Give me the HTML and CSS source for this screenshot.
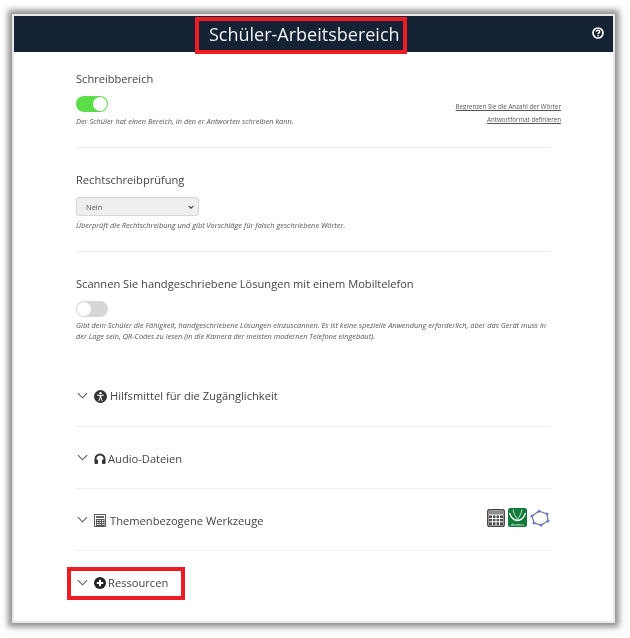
FILE: index.html
```html
<!DOCTYPE html>
<html lang="de">
<head>
<meta charset="utf-8">
<title>Schüler-Arbeitsbereich</title>
<link rel="stylesheet" href="styles.css">
</head>
<body>
<div class="frame">
  <header class="topbar">
    <h1 class="title">Schüler-Arbeitsbereich</h1>
    <svg class="help" viewBox="0 0 24 24" width="12" height="12"><circle cx="12" cy="12" r="10" fill="none" stroke="#fff" stroke-width="3.4"/><path d="M8.6 9.6c0-2 1.5-3.2 3.5-3.2s3.4 1.2 3.4 2.9c0 2.600-3.300 2.500-3.300 5" fill="none" stroke="#fff" stroke-width="2.800"/><rect x="10.800" y="15.800" width="2.800" height="2.800" fill="#fff"/></svg>
    <span class="callout callout-title"></span>
  </header>
  <main class="content">
    <section class="block block-write">
      <div class="block-main">
        <h2 class="label">Schreibbereich</h2>
        <span class="toggle toggle-on"><i class="knob"></i></span>
        <p class="hint">Der Schüler hat einen Bereich, in den er Antworten schreiben kann.</p>
      </div>
      <div class="links">
        <a class="link">Begrenzen Sie die Anzahl der Wörter</a>
        <a class="link">Antwortformat definieren</a>
      </div>
    </section>
    <section class="block block-spell">
      <h2 class="label">Rechtschreibprüfung</h2>
      <div class="select"><span>Nein</span>
        <svg viewBox="0 0 10 6" width="6" height="4"><path d="M1 1l4 4 4-4" fill="none" stroke="#444" stroke-width="1.800"/></svg>
      </div>
      <p class="hint">Überprüft die Rechtschreibung und gibt Vorschläge für falsch geschriebene Wörter.</p>
    </section>
    <section class="block block-scan">
      <h2 class="label">Scannen Sie handgeschriebene Lösungen mit einem Mobiltelefon</h2>
      <span class="toggle"><i class="knob"></i></span>
      <p class="hint hint-tight">Gibt dem Schüler die Fähigkeit, handgeschriebene Lösungen einzuscannen. Es ist keine spezielle Anwendung erforderlich, aber das Gerät muss in der Lage sein, QR-Codes zu lesen (in die Kamera der meisten modernen Telefone eingebaut).</p>
    </section>
    <section class="row row-first">
      <svg class="chev" viewBox="0 0 12 7" width="11" height="7"><path d="M1 1l5 5 5-5" fill="none" stroke="#555" stroke-width="1.100"/></svg>
      <svg class="ico ico-wide" viewBox="0 0 24 24" width="13" height="13"><circle cx="12" cy="12" r="12" fill="#333"/><circle cx="12" cy="5.800" r="2.300" fill="#fff"/><path d="M5.500 9.200L12 10.500l6.500-1.300" fill="none" stroke="#fff" stroke-width="1.800"/><path d="M12 10v5" stroke="#fff" stroke-width="3.200"/><path d="M11 14.500L8.800 20.500M13 14.500l2.200 6" fill="none" stroke="#fff" stroke-width="1.800"/></svg>
      <span class="row-text">Hilfsmittel für die Zugänglichkeit</span>
    </section>
    <section class="row">
      <svg class="chev" viewBox="0 0 12 7" width="11" height="7"><path d="M1 1l5 5 5-5" fill="none" stroke="#555" stroke-width="1.100"/></svg>
      <svg class="ico" viewBox="0 0 24 24" width="12" height="12"><path d="M3 15V12a9 9 0 0 1 18 0v3" fill="none" stroke="#333" stroke-width="4"/><rect x="1" y="13" width="7" height="9" rx="2" fill="#333"/><rect x="16" y="13" width="7" height="9" rx="2" fill="#333"/></svg>
      <span class="row-text">Audio-Dateien</span>
    </section>
    <section class="row">
      <svg class="chev" viewBox="0 0 12 7" width="11" height="7"><path d="M1 1l5 5 5-5" fill="none" stroke="#555" stroke-width="1.100"/></svg>
      <svg class="ico ico-calc" viewBox="0 0 12 13" width="12" height="13"><path d="M.5.500h11v12H.5z" fill="#fff" stroke="#555"/><path d="M2 2h8v2H2z" fill="#666"/><path d="M2 5.500h8M2 7.500h8M2 9.500h8M2 11.500h8M2.500 5v7M5 5v7M7.500 5v7M10 5v7" stroke="#555" stroke-width="1"/></svg>
      <span class="row-text">Themenbezogene Werkzeuge</span>
      <div class="tools">
        <svg viewBox="0 0 18 18" width="18" height="18"><rect x=".8" y=".8" width="16.400" height="16.400" rx="1.500" fill="#fff" stroke="#4a4038" stroke-width="1.500"/><rect x="2" y="2" width="14" height="3.500" fill="#8a8a8a"/><path d="M2 6.500h14v9.500H2z" fill="#4a4a52"/><path d="M5.500 6v10M9 6v10M12.500 6v10M2 9.500h14M2 12.800h14" stroke="#fff" stroke-width="1"/></svg>
        <svg class="tool-desmos" viewBox="0 0 19 19" width="19" height="19"><rect width="19" height="19" rx="2.500" fill="#127a3a"/><path d="M1.500 5C4 12 7 12.500 9.500 12.500S15 12 17.500 5" fill="none" stroke="#fff" stroke-width="1.300"/><path d="M5 1.500c1 5 3 8.500 6.500 11.500M14 1.500c-1 5-3 8.500-6.500 11.500" fill="none" stroke="#cfe8d6" stroke-width=".9"/><text x="9.500" y="17.500" class="desmos-text">desmos</text></svg>
        <svg class="tool-geo" viewBox="0 0 20 18" width="20" height="18"><path d="M9 2l8 3 1 7-7 4-7-2L2 7z" fill="none" stroke="#777" stroke-width="1.200"/><g fill="#6a78cf"><circle cx="9" cy="2.200" r="1.500"/><circle cx="17" cy="5" r="1.500"/><circle cx="18" cy="12" r="1.500"/><circle cx="11" cy="16" r="1.500"/><circle cx="4" cy="14" r="1.500"/><circle cx="2" cy="7" r="1.500"/></g></svg>
      </div>
    </section>
    <section class="row row-last">
      <svg class="chev" viewBox="0 0 12 7" width="11" height="7"><path d="M1 1l5 5 5-5" fill="none" stroke="#555" stroke-width="1.100"/></svg>
      <svg class="ico" viewBox="0 0 24 24" width="12" height="12"><circle cx="12" cy="12" r="12" fill="#222"/><path d="M12 5.500v13M5.500 12h13" stroke="#fff" stroke-width="4"/></svg>
      <span class="row-text">Ressourcen</span>
      <span class="callout callout-res"></span>
    </section>
  </main>
</div>
</body>
</html>
```
FILE: styles.css
```css
* { box-sizing: border-box; }
html, body { margin: 0; padding: 0; background: #fff; }
body {
  width: 630px;
  height: 638px;
  padding: 16px 0 0 14px;
  overflow: hidden;
  font-family: "Open Sans", sans-serif;
  color: #444;
}
.frame {
  width: 599px;
  height: 605px;
  background: #fff;
  box-shadow: 0 0 0 2px #e8e8e8, 0 0 6px 6px #8e8e8e;
  filter: blur(.35px);
}
.topbar {
  position: relative;
  height: 36px;
  background: #152234;
  color: #f0f2f4;
}
.title {
  margin: 0;
  position: absolute;
  left: 195px;
  top: 5px;
  font-size: 18px;
  line-height: 27px;
  font-weight: 400;
}
.help { position: absolute; left: 578px; top: 11px; }
.callout {
  position: absolute;
  border: 4px solid #ed1c24;
}
.callout-title { left: 181px; top: 1px; width: 212px; height: 37px; }
.content { padding: 0 62px; }
.block { border-bottom: 1px solid #eeeeee; }
.block-write {
  display: flex;
  justify-content: space-between;
  height: 96px;
  padding-top: 19px;
}
.block-spell { height: 104px; padding-top: 24px; }
.block-scan { height: 112px; padding-top: 24px; border-bottom: 0; }
.label {
  margin: 0;
  font-size: 11.100px;
  line-height: 16px;
  font-weight: 400;
  color: #444;
}
.toggle {
  display: block;
  position: relative;
  width: 32px;
  height: 16px;
  margin-top: 9px;
  border-radius: 8px;
  background: #d6d6d6;
}
.toggle-on { background: #5bdc49; }
.knob {
  position: absolute;
  top: 1px;
  left: 1px;
  width: 14px;
  height: 14px;
  border-radius: 50%;
  background: #fff;
}
.toggle-on .knob { left: 17px; }
.hint {
  margin: 4px 0 0;
  font-size: 7.400px;
  line-height: 11px;
  font-style: italic;
  color: #555;
}
.hint-tight { margin-top: 3px; }
.block-main { flex: 1; }
.links {
  display: flex;
  flex-direction: column;
  align-items: flex-end;
  gap: 6px;
  margin: 32px -10px 0 0;
}
.link {
  font-size: 6.200px;
  line-height: 7px;
  color: #555;
  text-decoration: underline;
}
.select {
  display: flex;
  align-items: center;
  justify-content: space-between;
  width: 123px;
  height: 19px;
  margin-top: 9px;
  padding: 0 4px 0 9px;
  border: 1px solid #d6d6d6;
  border-radius: 3px;
  background: #efefef;
  font-size: 7.500px;
  color: #555;
}
.row {
  position: relative;
  display: flex;
  align-items: center;
  height: 62px;
  padding-top: 2px;
  border-bottom: 1px solid #eeeeee;
  font-size: 11.150px;
  color: #444;
}
.row-first { height: 63px; }
.row-last { border-bottom: 0; }
.chev { margin: 0 6px 2px 1px; }
.ico { margin-right: 2px; }
.ico-wide { margin-right: 3px; }
.ico-calc { margin-right: 4px; }
.row-text { line-height: 16px; }
.tools {
  display: flex;
  align-items: center;
  gap: 3px;
  margin: -6px 1px 0 auto;
}
.desmos-text {
  font-family: "Open Sans", sans-serif;
  font-size: 3.500px;
  fill: #fff;
  text-anchor: middle;
}
.callout-res { left: -9px; top: 16px; width: 118px; height: 33px; }
```
